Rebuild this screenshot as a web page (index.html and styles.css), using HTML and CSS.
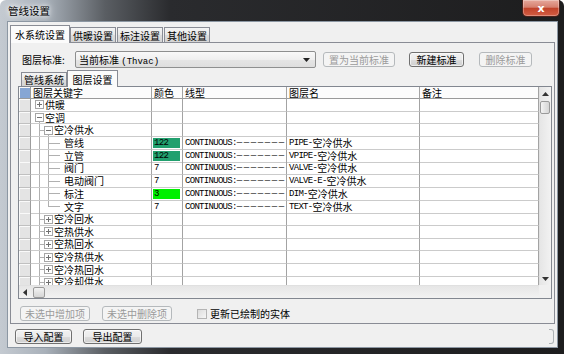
FILE: index.html
```html
<!DOCTYPE html>
<html>
	<head>
		<meta charset="UTF-8">
		<title>管线设置</title>
		<link rel="stylesheet" href="styles.css">
	</head>
	<body>
		<div class="window">
			<div class="titlebar">
				<span class="title">管线设置</span>
				<span class="close">x</span>
			</div>
			<div class="client">
				<div class="tabs">
					<span class="tab on">水系统设置</span>
					<span class="tab">供暖设置</span>
					<span class="tab">标注设置</span>
					<span class="tab">其他设置</span>
				</div>
				<div class="panel">
					<div class="std-row">
						<span class="label">图层标准:</span>
						<div class="combo">
							<span>当前标准 <span class="en2">(Thvac)</span></span>
							<svg width="7" height="4" viewBox="0 0 7 4"><path d="M0 0H7L3.5 4z" fill="#222"/></svg>
						</div>
						<button type="button" class="btn off b-set">置为当前标准</button>
						<button type="button" class="btn b-new">新建标准</button>
						<button type="button" class="btn off b-del">删除标准</button>
					</div>
					<div class="subtabs">
						<span class="stab">管线系统</span>
						<span class="stab on">图层设置</span>
					</div>
					<div class="grid">
						<div class="gbody">
							<div class="cells">
								<div class="row hd"><span class="rh corner"></span><span class="c">图层关键字</span><span class="c">颜色</span><span class="c">线型</span><span class="c">图层名</span><span class="c">备注</span></div>
								<div class="row"><span class="rh"></span><span class="c key l1"><i class="box plus"></i>供暖</span><span class="c"></span><span class="c"></span><span class="c"></span><span class="c"></span></div>
								<div class="row"><span class="rh"></span><span class="c key l1 open"><i class="box"></i>空调</span><span class="c"></span><span class="c"></span><span class="c"></span><span class="c"></span></div>
								<div class="row"><span class="rh"></span><span class="c key l2 open"><i class="box"></i>空冷供水</span><span class="c"></span><span class="c"></span><span class="c"></span><span class="c"></span></div>
								<div class="row"><span class="rh"></span><span class="c key l3">管线</span><span class="c clr"><span class="sw s122"><span class="en">122</span></span></span><span class="c"><span class="en">CONTINUOUS:</span><span class="dash">———————</span></span><span class="c"><span class="en">PIPE-</span>空冷供水</span><span class="c"></span></div>
								<div class="row"><span class="rh"></span><span class="c key l3">立管</span><span class="c clr"><span class="sw s122"><span class="en">122</span></span></span><span class="c"><span class="en">CONTINUOUS:</span><span class="dash">———————</span></span><span class="c"><span class="en">VPIPE-</span>空冷供水</span><span class="c"></span></div>
								<div class="row"><span class="rh"></span><span class="c key l3">阀门</span><span class="c clr"><span class="sw"><span class="en">7</span></span></span><span class="c"><span class="en">CONTINUOUS:</span><span class="dash">———————</span></span><span class="c"><span class="en">VALVE-</span>空冷供水</span><span class="c"></span></div>
								<div class="row"><span class="rh"></span><span class="c key l3">电动阀门</span><span class="c clr"><span class="sw"><span class="en">7</span></span></span><span class="c"><span class="en">CONTINUOUS:</span><span class="dash">———————</span></span><span class="c"><span class="en">VALVE-E-</span>空冷供水</span><span class="c"></span></div>
								<div class="row"><span class="rh"></span><span class="c key l3">标注</span><span class="c clr"><span class="sw s3"><span class="en">3</span></span></span><span class="c"><span class="en">CONTINUOUS:</span><span class="dash">———————</span></span><span class="c"><span class="en">DIM-</span>空冷供水</span><span class="c"></span></div>
								<div class="row"><span class="rh"></span><span class="c key l3 last">文字</span><span class="c clr"><span class="sw"><span class="en">7</span></span></span><span class="c"><span class="en">CONTINUOUS:</span><span class="dash">———————</span></span><span class="c"><span class="en">TEXT-</span>空冷供水</span><span class="c"></span></div>
								<div class="row"><span class="rh"></span><span class="c key l2"><i class="box plus"></i>空冷回水</span><span class="c"></span><span class="c"></span><span class="c"></span><span class="c"></span></div>
								<div class="row"><span class="rh"></span><span class="c key l2"><i class="box plus"></i>空热供水</span><span class="c"></span><span class="c"></span><span class="c"></span><span class="c"></span></div>
								<div class="row"><span class="rh"></span><span class="c key l2"><i class="box plus"></i>空热回水</span><span class="c"></span><span class="c"></span><span class="c"></span><span class="c"></span></div>
								<div class="row"><span class="rh"></span><span class="c key l2"><i class="box plus"></i>空冷热供水</span><span class="c"></span><span class="c"></span><span class="c"></span><span class="c"></span></div>
								<div class="row"><span class="rh"></span><span class="c key l2"><i class="box plus"></i>空冷热回水</span><span class="c"></span><span class="c"></span><span class="c"></span><span class="c"></span></div>
								<div class="row cut"><span class="rh"></span><span class="c key l2"><i class="box plus"></i>空冷却供水</span><span class="c"></span><span class="c"></span><span class="c"></span><span class="c"></span></div>
							</div>
							<div class="vscroll">
								<span class="arr"><svg width="7" height="4" viewBox="0 0 7 4"><path d="M0 4L3.5 0L7 4z" fill="#333"/></svg></span>
								<span class="vthumb"></span>
								<span class="fill"></span>
								<span class="arr"><svg width="7" height="4" viewBox="0 0 7 4"><path d="M0 0H7L3.5 4z" fill="#333"/></svg></span>
							</div>
						</div>
						<div class="hbar">
							<div class="hscroll">
								<span class="harr"><svg width="4" height="7" viewBox="0 0 4 7"><path d="M4 0V7L0 3.5z" fill="#333"/></svg></span>
								<span class="hthumb"></span>
							</div>
							<span class="sbcorner"></span>
						</div>
					</div>
					<div class="opt-row">
						<button type="button" class="btn off b-opt">未选中增加项</button>
						<button type="button" class="btn off b-opt">未选中删除项</button>
						<span class="chk"></span>
						<span class="chk-label">更新已绘制的实体</span>
					</div>
				</div>
				<div class="bottom-row">
					<button type="button" class="btn b-imp">导入配置</button>
					<button type="button" class="btn b-exp">导出配置</button>
					<span class="stub"></span>
				</div>
			</div>
		</div>
	</body>
</html>
```

FILE: styles.css
```css
* {
	margin: 0;
	padding: 0;
	box-sizing: border-box;
}

body {
	background: #fff;
	font-family: "Noto Sans CJK SC", sans-serif;
	font-size: 10px;
	color: #000;
}

/* window frame */
.window {
	width: 564px;
	height: 354px;
	display: flex;
	flex-direction: column;
	padding: 0 6px 6px 7px;
	border-radius: 6px 6px 0 0;
	background: linear-gradient(to right, #c4cad1 0, #a9b1ba 45px, #5a5e63 105px, #2a2b2e 170px, #1d1d1e 100%);
}

.titlebar {
	height: 21px;
	display: flex;
	align-items: flex-start;
}

.title {
	margin: 5px 0 0 1px;
	font-size: 10.5px;
	line-height: 12px;
	text-shadow: 0 0 4px #fff, 0 0 8px #fff;
}

.close {
	margin-left: auto;
	margin-right: -2px;
	width: 38px;
	height: 17px;
	display: flex;
	align-items: center;
	justify-content: center;
	color: #fff;
	font: bold 11px "DejaVu Sans", sans-serif;
	background: linear-gradient(#e6a89c 0, #d6806f 45%, #c1432b 52%, #d35d43 100%);
	border: 1px solid #4a211b;
	border-top: none;
	border-radius: 0 0 5px 5px;
	box-shadow: inset 0 0 0 1px rgba(255, 255, 255, 0.3);
}

.client {
	flex: 1;
	display: flex;
	flex-direction: column;
	background: #f0f0f0;
	border: 1px solid #8c97a3;
}

/* outer tabs */
.tabs {
	height: 20px;
	padding-left: 2px;
	display: flex;
	align-items: flex-end;
}

.tab,
.stab {
	height: 15px;
	padding: 0 2px;
	display: flex;
	align-items: center;
	justify-content: center;
	white-space: nowrap;
	border: 1px solid #898c95;
	border-bottom: none;
	background: linear-gradient(#f4f4f4, #e8e8e8 50%, #dcdcdc 50%, #d4d4d4);
	margin-right: 1px;
}

.tab.on {
	height: 18px;
	padding: 0 4px;
	margin-bottom: -1px;
	margin-right: 0;
	background: #fbfbfb;
	position: relative;
	z-index: 1;
}

.panel {
	height: 282px;
	margin: 0 2px;
	border: 1px solid #898c95;
	background: #f0f0f0;
}

.std-row {
	height: 17px;
	margin-top: 8px;
	padding-left: 11px;
	display: flex;
	align-items: center;
}

.label {
	width: 53px;
}

.combo {
	width: 241px;
	height: 17px;
	padding: 0 5px 0 3px;
	display: flex;
	align-items: center;
	justify-content: space-between;
	border: 1px solid #8e8f8f;
	border-radius: 2px;
	background: linear-gradient(#f9f9f9, #efefef 50%, #e5e5e5 50%, #dedede);
}

.en2 {
	font-family: "Liberation Mono", monospace;
	font-size: 9px;
}

.btn {
	height: 15px;
	padding: 0;
	font: inherit;
	color: #000;
	white-space: nowrap;
	display: flex;
	align-items: center;
	justify-content: center;
	border: 1px solid #707070;
	border-radius: 3px;
	background: linear-gradient(#f2f2f2 0, #ebebeb 50%, #dddddd 50%, #cfcfcf 100%);
	box-shadow: inset 0 0 0 1px rgba(255, 255, 255, 0.6);
}

.btn.off {
	color: #9a9a9a;
	border-color: #b5b9bc;
	background: #f4f4f4;
	box-shadow: none;
}

.b-set {
	width: 72px;
	margin-left: 7px;
}

.b-new {
	width: 55px;
	margin-left: 14px;
}

.b-del {
	width: 53px;
	margin-left: 15px;
}

/* inner tabs */
.subtabs {
	height: 18px;
	padding-left: 10px;
	display: flex;
	align-items: flex-end;
}

.stab {
	height: 14px;
	width: 46px;
	padding: 0;
	margin-right: 0;
}

.stab.on {
	height: 17px;
	width: 51px;
	margin-bottom: -1px;
	background: #fbfbfb;
	position: relative;
	z-index: 1;
}

/* layer grid */
.grid {
	width: 534px;
	height: 213px;
	margin-left: 7px;
	border: 1px solid #828790;
	display: flex;
	flex-direction: column;
	background: #fff;
}

.gbody {
	height: 198px;
	display: flex;
}

.cells {
	flex: 1;
	background: #fff;
}

.row {
	height: 12.7px;
	display: grid;
	grid-template-columns: 12px 121px 31px 104px 133px 119px;
}

.row.hd {
	height: 12px;
}

/* last row is only partly shown above the scrollbar */
.row.cut {
	height: 8.2px;
	overflow: hidden;
}

.c {
	display: flex;
	align-items: center;
	padding-left: 2px;
	white-space: nowrap;
	line-height: 10px;
	border-right: 1px solid #a3a3a3;
	border-bottom: 1px solid #cbcbcb;
}

.cut .c,
.cut .rh {
	height: 12.7px;
}

.hd .c {
	background: #fcfcfc;
	border-bottom-color: #9a9a9a;
}

.rh {
	background: #e4e4e4;
	border-right: 1px solid #9c9c9c;
	border-bottom: 1px solid #c0c0c0;
	box-shadow: inset 1px 1px #fafafa;
}

.rh.corner {
	background: #86a6d4;
	border-bottom-color: #9a9a9a;
}

.box {
	width: 9px;
	height: 9px;
	margin-right: 1px;
	flex-shrink: 0;
	border: 1px solid #a6a6a6;
	background: linear-gradient(#707070, #707070) center / 5px 1px no-repeat, #fff;
}

.box.plus {
	background: linear-gradient(#707070, #707070) center / 5px 1px no-repeat, linear-gradient(#707070, #707070) center / 1px 5px no-repeat, #fff;
}

/* tree connector lines */
.key.l1 {
	padding-left: 4px;
}

.key.l1.open {
	background: linear-gradient(#b0b0b0, #b0b0b0) 8px 100% / 1px 2px no-repeat;
}

.key.l2 {
	padding-left: 13px;
	background:
		linear-gradient(#b0b0b0, #b0b0b0) 8px 0 / 1px 100% no-repeat,
		linear-gradient(#b0b0b0, #b0b0b0) 8px 50% / 5px 1px no-repeat;
}

.key.l2.open {
	background:
		linear-gradient(#b0b0b0, #b0b0b0) 8px 0 / 1px 100% no-repeat,
		linear-gradient(#b0b0b0, #b0b0b0) 8px 50% / 5px 1px no-repeat,
		linear-gradient(#b0b0b0, #b0b0b0) 17px 100% / 1px 2px no-repeat;
}

.key.l3 {
	padding-left: 33px;
	background:
		linear-gradient(#b0b0b0, #b0b0b0) 8px 0 / 1px 100% no-repeat,
		linear-gradient(#b0b0b0, #b0b0b0) 17px 0 / 1px 100% no-repeat,
		linear-gradient(#b0b0b0, #b0b0b0) 17px 50% / 12px 1px no-repeat;
}

.key.l3.last {
	background:
		linear-gradient(#b0b0b0, #b0b0b0) 8px 0 / 1px 100% no-repeat,
		linear-gradient(#b0b0b0, #b0b0b0) 17px 0 / 1px 50% no-repeat,
		linear-gradient(#b0b0b0, #b0b0b0) 17px 50% / 12px 1px no-repeat;
}

.clr {
	padding: 1px 2px 1px 1px;
}

.sw {
	flex: 1;
	height: 100%;
	display: flex;
	align-items: center;
	padding-left: 1px;
}

.s122 {
	background: #21a06e;
}

.s3 {
	background: #00f000;
}

.en {
	font-family: "Liberation Mono", monospace;
	font-size: 9px;
	letter-spacing: -0.7px;
}

.dash {
	font-family: "Liberation Mono", monospace;
	font-size: 9px;
	letter-spacing: 1.6px;
	color: #222;
}

/* scrollbars */
.vscroll {
	width: 12px;
	display: flex;
	flex-direction: column;
	background: linear-gradient(to right, #e6e6e6, #f2f2f2);
	border-left: 1px solid #e0e0e0;
}

.arr {
	height: 13px;
	display: flex;
	align-items: center;
	justify-content: center;
}

.vthumb {
	height: 13px;
	margin: 1px 1px 0 0;
	border: 1px solid #9a9a9a;
	border-radius: 2px;
	background: linear-gradient(to right, #f4f4f4, #e3e3e3 50%, #d6d6d6);
}

.fill {
	flex: 1;
}

.hbar {
	height: 13px;
	display: flex;
}

.hscroll {
	flex: 1;
	display: flex;
	align-items: center;
	background: linear-gradient(#e6e6e6, #f2f2f2);
	border-top: 1px solid #e0e0e0;
}

.harr {
	width: 12px;
	display: flex;
	justify-content: center;
}

.hthumb {
	width: 12px;
	height: 11px;
	margin-left: 2px;
	border: 1px solid #9a9a9a;
	border-radius: 2px;
	background: linear-gradient(#f4f4f4, #e3e3e3 50%, #d6d6d6);
}

.sbcorner {
	width: 12px;
	background: #f0f0f0;
}

/* bottom controls */
.opt-row {
	height: 15px;
	margin-top: 7px;
	padding-left: 9px;
	display: flex;
	align-items: center;
}

.b-opt {
	width: 70px;
	margin-right: 12px;
}

.chk {
	width: 10px;
	height: 10px;
	margin-left: 13px;
	border: 1px solid #b4b4b4;
	background: linear-gradient(135deg, #dcdcdc, #f6f6f6);
}

.chk-label {
	margin-left: 3px;
}

.bottom-row {
	height: 15px;
	margin-top: 5px;
	padding-left: 7px;
	display: flex;
}

.b-imp {
	width: 57px;
}

.b-exp {
	width: 59px;
	margin-left: 11px;
}

.stub {
	width: 5px;
	margin: 0 3px 0 auto;
	border: 1px solid #adb2b5;
	border-left: none;
	border-radius: 0 3px 3px 0;
}
```
